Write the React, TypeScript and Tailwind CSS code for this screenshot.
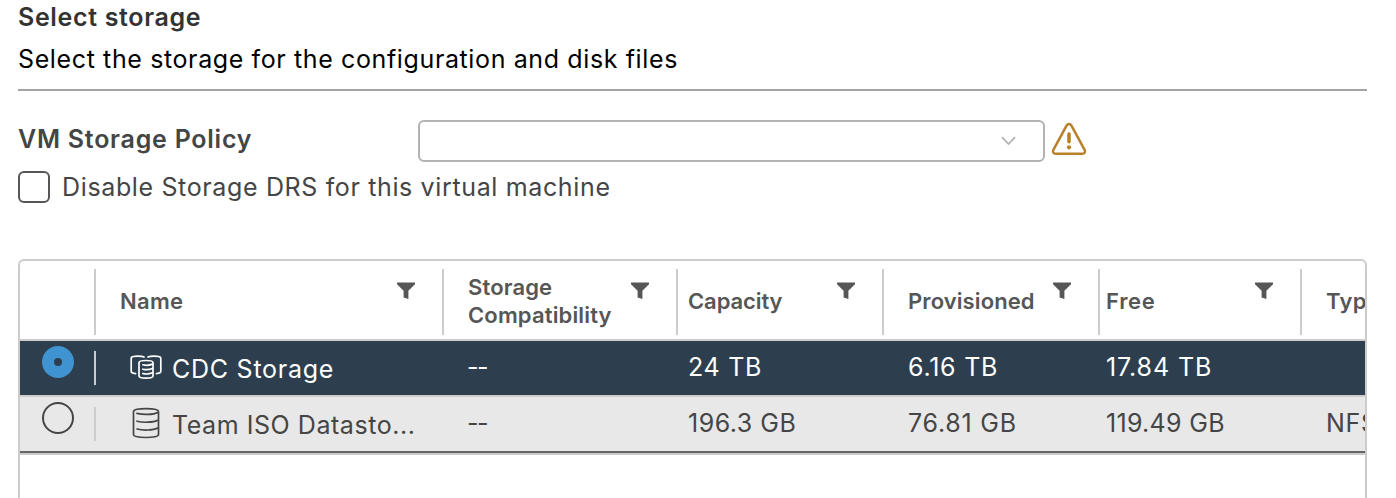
import type { ReactNode } from 'react';

function FilterIcon() {
  return (
    <svg width="18" height="17" viewBox="0 0 18 17" className="mt-[21px] mr-[27px] ml-auto shrink-0 self-start text-[#565656]">
      <path d="M0 .5h18v1.8L11.4 8.800V17L6.600 15.400V8.800L0 2.300z" fill="currentColor" />
    </svg>
  );
}

function ClusterIcon() {
  return (
    <svg width="32" height="26" viewBox="0 0 32 26" fill="none" stroke="currentColor" strokeWidth="1.700" strokeLinecap="round">
      <path d="M14 3C12.500 2.300 10.500 2.200 8 2.200C4 2.200 1.200 2.700 1.200 4.200V17.300C1.200 18.700 3 19.400 5.600 19.700" />
      <path d="M18 3C19.500 2.300 21.500 2.200 24 2.200C28 2.200 30.800 2.700 30.800 4.200V17.300C30.800 18.700 29 19.400 26.400 19.700" />
      <path d="M9 8.600V22C9 23.400 12 24.100 16 24.100S23 23.400 23 22V8.600C23 7.200 20 6.500 16 6.500S9 7.200 9 8.600Z" />
      <path d="M12.800 10.800C15.500 11.500 19.500 11.300 22.500 10.100M12.800 15.200C15.500 15.900 19.500 15.700 22.500 14.500M12.800 19.500C15.500 20.200 19.500 20 22.500 18.800" />
    </svg>
  );
}

function DatastoreIcon() {
  return (
    <svg width="28" height="32" viewBox="0 0 28 32" fill="none" stroke="currentColor" strokeWidth="1.700" strokeLinecap="round">
      <path d="M1.500 4.500V27.600C1.500 29.400 7 30.500 14 30.500S26.500 29.400 26.500 27.600V4.500C26.500 2.700 21 1.600 14 1.600S1.500 2.700 1.500 4.500Z" />
      <path d="M5 6.400C11 7.900 21 7.900 26 5.400M5 14.200C11 15.700 21 15.700 26 13.200M5 22C11 23.500 21 23.500 26 21" />
    </svg>
  );
}

function WarningIcon() {
  return (
    <svg width="36" height="34" viewBox="0 0 36 34" fill="none" stroke="#b9802a" strokeWidth="2.500" strokeLinejoin="round" strokeLinecap="round">
      <path d="M15.700 3.300 2.500 27.600C1.300 29.800 2.300 31.700 4.700 31.700H31.300C33.700 31.700 34.700 29.800 33.500 27.600L20.300 3.300C19.200 1.400 16.800 1.400 15.700 3.300Z" />
      <path d="M18 12V19.800" strokeWidth="3.600" />
      <circle cx="18" cy="25.300" r="2.100" fill="#b9802a" stroke="none" />
    </svg>
  );
}

const cols = 'grid grid-cols-[74px_348px_234px_206px_216px_202px_160px] w-[1440px]';

function HeaderCell({ children, pad, filter = true }: { children: ReactNode; pad: string; filter?: boolean }) {
  return (
    <div className="flex h-[78px]">
      <div className="mt-2 h-[66px] w-0.5 shrink-0 bg-[#cccccc]" />
      <div className={`${pad} flex items-center pt-0.5 text-[22px] leading-7 font-semibold text-[#565656]`}>{children}</div>
      {filter && <FilterIcon />}
    </div>
  );
}

function Cell({ children, pad, tracking }: { children?: ReactNode; pad: string; tracking: string }) {
  return <div className={`${pad} ${tracking} flex items-center pb-0.5 whitespace-nowrap`}>{children}</div>;
}

function NameCell({ icon, name, tracking }: { icon: ReactNode; name: string; tracking: string }) {
  return (
    <div className="flex">
      <div className="mt-2.5 h-[34px] w-0.5 shrink-0 bg-[#cccccc]" />
      <div className="ml-[34px] flex w-8 shrink-0 items-center justify-center pb-[3px]">{icon}</div>
      <div className={`${tracking} ml-2.5 flex items-center pt-0.5 whitespace-nowrap`}>{name}</div>
    </div>
  );
}

export default function App() {
  return (
    <main className="h-[498px] overflow-hidden bg-white pr-[29px] pl-[18px] font-['Inter',sans-serif] text-[25px] leading-[34px] text-[#454545]">
      <h1 className="font-semibold tracking-[0.66px] text-[#333333]">Select storage</h1>
      <p className="mt-2 tracking-[0.62px] text-black">Select the storage for the configuration and disk files</p>
      <div className="mt-[13px] h-0.5 bg-[#a3a3a3]" />

      <div className="mt-[29px] flex h-[42px] items-center">
        <label className="w-[400px] pb-1 font-semibold tracking-[0.75px]">VM Storage Policy</label>
        <div className="flex h-[42px] w-[627px] items-center justify-end rounded-md border-2 border-[#b3b3b3] pr-[27px]">
          <svg width="15" height="10" viewBox="0 0 15 10" fill="none" stroke="#b3b3b3" strokeWidth="1.800">
            <path d="M1 1.200 7.500 8 14 1.200" />
          </svg>
        </div>
        <div className="ml-1.5 pb-1">
          <WarningIcon />
        </div>
      </div>
      <div className="mt-[9px] flex h-8 items-center">
        <div className="h-8 w-8 rounded-md border-2 border-[#565656]" />
        <span className="ml-3 tracking-[0.64px]">Disable Storage DRS for this virtual machine</span>
      </div>

      <div className="mt-14 h-[260px] overflow-hidden rounded-md border-2 border-[#cccccc]">
        <div className={cols}>
          <div />
          <HeaderCell pad="pl-6 tracking-[0.3px]">Name</HeaderCell>
          <HeaderCell pad="pl-6 tracking-[0.15px]">
            <span>
              Storage
              <br />
              Compatibility
            </span>
          </HeaderCell>
          <HeaderCell pad="pl-2.5 tracking-[-0.1px]">Capacity</HeaderCell>
          <HeaderCell pad="pl-6 tracking-[0.1px]">Provisioned</HeaderCell>
          <HeaderCell pad="pl-1.5 tracking-[0.7px]">Free</HeaderCell>
          <HeaderCell pad="pl-6 tracking-[0.3px]" filter={false}>Type</HeaderCell>
        </div>
        <div className={`${cols} h-14 border-t-2 border-[#cccccc] bg-[#2d3f4e] text-white`}>
          <div className="pt-[5px] pl-[22px]">
            <div className="flex h-8 w-8 items-center justify-center rounded-full bg-[#3f93d0]">
              <div className="h-2 w-2 rounded-full bg-[#2d3f4e]" />
            </div>
          </div>
          <NameCell icon={<ClusterIcon />} name="CDC Storage" tracking="tracking-[0.75px]" />
          <Cell pad="pl-[25px]" tracking="tracking-[-1.5px]">--</Cell>
          <Cell pad="pl-3" tracking="tracking-[0.7px]">24 TB</Cell>
          <Cell pad="pl-[26px]" tracking="tracking-[0.75px]">6.16 TB</Cell>
          <Cell pad="pl-2" tracking="tracking-[0.9px]">17.84 TB</Cell>
          <div />
        </div>
        <div className={`${cols} h-14 border-t-2 border-[#cccccc] bg-[#e8e8e8]`}>
          <div className="pt-[5px] pl-[22px]">
            <div className="h-8 w-8 rounded-full border-2 border-[#454545]" />
          </div>
          <NameCell icon={<DatastoreIcon />} name="Team ISO Datasto..." tracking="tracking-[0.55px]" />
          <Cell pad="pl-[25px]" tracking="tracking-[-1.5px]">--</Cell>
          <Cell pad="pl-3" tracking="tracking-[0.5px]">196.3 GB</Cell>
          <Cell pad="pl-[26px]" tracking="tracking-[0.75px]">76.81 GB</Cell>
          <Cell pad="pl-2" tracking="tracking-[0.3px]">119.49 GB</Cell>
          <Cell pad="pl-[26px]" tracking="tracking-[0.7px]">NFS</Cell>
        </div>
        <div className="h-0.5 bg-[#666666]" />
        <div className="h-0.5 bg-[#cccccc]" />
      </div>
    </main>
  );
}
